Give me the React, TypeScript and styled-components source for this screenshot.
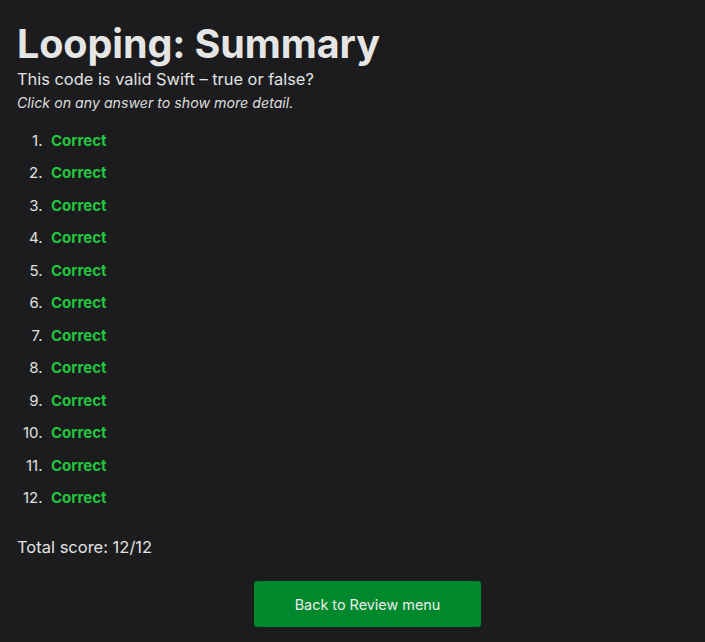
import React from "react";
import styled, { createGlobalStyle } from "styled-components";

const Global = createGlobalStyle`
  html, body {
    margin: 0;
    padding: 0;
    background: #1c1c1e;
  }
  body {
    font-family: Inter, "Noto Sans", sans-serif;
    color: #e3e3e3;
  }
`;

const Page = styled.main`
  min-height: 642px;
  box-sizing: border-box;
  padding: 22px 17px 0 17px;
  background: #1c1c1e;
`;

const Title = styled.h1`
  margin: 0;
  font-size: 39.5px;
  font-weight: 700;
  line-height: 44px;
  color: #e5e5e5;
  letter-spacing: -0.1px;
`;

const Subtitle = styled.p`
  margin: 1px 0 0 0;
  font-size: 16.4px;
  line-height: 24px;
  color: #e3e3e3;
`;

const Hint = styled.p`
  margin: 1px 0 0 0;
  font-size: 14.2px;
  line-height: 22px;
  font-style: italic;
  color: #dcdcdc;
`;

const List = styled.ol`
  margin: 15.5px 0 0 0;
  padding: 0;
  list-style: none;
  counter-reset: answer;
  font-size: 15px;
  line-height: 22.5px;
  color: #e0e0e0;
`;

const Item = styled.li`
  display: flex;
  margin-bottom: 10px;
  counter-increment: answer;
  &::before {
    content: counter(answer) ".";
    width: 25.5px;
    margin-right: 8.5px;
    text-align: right;
    color: #e0e0e0;
  }
  &:last-child {
    margin-bottom: 0;
  }
`;

const Result = styled.span<{ $correct: boolean }>`
  font-weight: 700;
  color: ${(p) => (p.$correct ? "#20c63d" : "#ff453a")};
  cursor: pointer;
`;

const Score = styled.p`
  margin: 26.5px 0 0 0;
  font-size: 16.5px;
  line-height: 22px;
  color: #e3e3e3;
`;

const Actions = styled.div`
  display: flex;
  justify-content: flex-start;
  padding-left: 237px;
  margin-top: 23px;
`;

const Button = styled.button`
  width: 227px;
  height: 46px;
  border: none;
  border-radius: 3px;
  background: #00892c;
  color: #ececec;
  font-family: Inter, "Noto Sans", sans-serif;
  font-size: 14.4px;
  cursor: pointer;
`;

const results = Array.from({ length: 12 }, () => true);

export default function App() {
  return (
    <>
      <Global />
      <Page>
        <Title>Looping: Summary</Title>
        <Subtitle>This code is valid Swift – true or false?</Subtitle>
        <Hint>Click on any answer to show more detail.</Hint>
        <List>
          {results.map((ok, i) => (
            <Item key={i}>
              <Result $correct={ok}>{ok ? "Correct" : "Wrong"}</Result>
            </Item>
          ))}
        </List>
        <Score>Total score: 12/12</Score>
        <Actions>
          <Button>Back to Review menu</Button>
        </Actions>
      </Page>
    </>
  );
}
